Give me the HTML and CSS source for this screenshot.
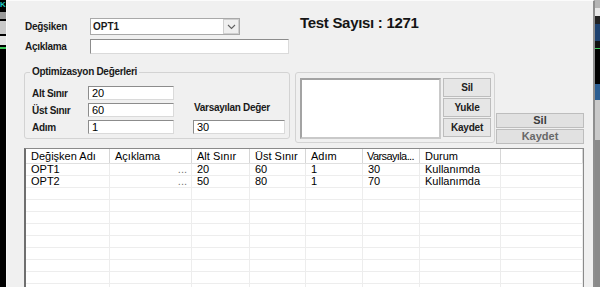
FILE: index.html
```html
<!DOCTYPE html>
<html lang="tr">
<head>
  <meta charset="UTF-8" />
  <meta name="viewport" content="width=device-width, initial-scale=1.0" />
  <title>Optimizasyon</title>
  <link rel="stylesheet" href="styles.css">
</head>
<body>
  <div class="screen">
    <div class="strip strip-left">
      <span class="sl-k">K</span>
      <span class="sl-gap"></span>
      <span class="sl-bar"></span>
      <span class="sl-gap"></span>
      <span class="sl-box"></span>
      <span class="sl-gap"></span>
      <span class="sl-box2"></span>
      <span class="sl-gap"></span>
      <span class="sl-green"></span>
    </div>

    <div class="dialog">
      <div class="top-row">
        <div class="fields">
          <div class="field-row">
            <label class="lbl">Değşiken</label>
            <div class="combo">
              <span class="combo-text">OPT1</span>
              <span class="combo-arrow">
                <svg width="9" height="6" viewBox="0 0 9 6"><polyline points="1,1 4.5,4.5 8,1" fill="none" stroke="#606060" stroke-width="1.1"/></svg>
              </span>
            </div>
          </div>
          <div class="field-row">
            <label class="lbl">Açıklama</label>
            <input class="txt txt-desc" type="text" value="">
          </div>
        </div>
        <div class="test-count">Test Sayısı : 1271</div>
      </div>

      <div class="mid-row">
        <fieldset class="opt-group">
          <legend>Optimizasyon Değerleri</legend>
          <div class="opt-cols">
            <div class="opt-left">
              <div class="opt-row">
                <label class="lbl opt-lbl">Alt Sınır</label>
                <input class="txt opt-txt" type="text" value="20">
              </div>
              <div class="opt-row">
                <label class="lbl opt-lbl">Üst Sınır</label>
                <input class="txt opt-txt" type="text" value="60">
              </div>
              <div class="opt-row">
                <label class="lbl opt-lbl">Adım</label>
                <input class="txt opt-txt" type="text" value="1">
              </div>
            </div>
            <div class="opt-right">
              <label class="lbl default-lbl">Varsayılan Değer</label>
              <input class="txt default-txt" type="text" value="30">
            </div>
          </div>
        </fieldset>

        <div class="preset-group">
          <div class="preset-list"></div>
          <div class="preset-btns">
            <button class="btn-small">Sil</button>
            <button class="btn-small">Yukle</button>
            <button class="btn-small">Kaydet</button>
          </div>
        </div>

        <div class="big-btns">
          <button class="btn-big">Sil</button>
          <button class="btn-big btn-dim">Kaydet</button>
        </div>
      </div>

      <div class="listview">
        <div class="lv-row lv-head">
          <span>Değişken Adı</span><span>Açıklama</span><span>Alt Sınır</span><span>Üst Sınır</span><span>Adım</span><span class="tight">Varsayıla...</span><span>Durum</span><span></span>
        </div>
        <div class="lv-row">
          <span>OPT1</span><span class="dots">...</span><span>20</span><span>60</span><span>1</span><span>30</span><span>Kullanımda</span><span></span>
        </div>
        <div class="lv-row">
          <span>OPT2</span><span class="dots">...</span><span>50</span><span>80</span><span>1</span><span>70</span><span>Kullanımda</span><span></span>
        </div>
        <div class="lv-row"><span></span><span></span><span></span><span></span><span></span><span></span><span></span><span></span></div>
        <div class="lv-row"><span></span><span></span><span></span><span></span><span></span><span></span><span></span><span></span></div>
        <div class="lv-row"><span></span><span></span><span></span><span></span><span></span><span></span><span></span><span></span></div>
        <div class="lv-row"><span></span><span></span><span></span><span></span><span></span><span></span><span></span><span></span></div>
        <div class="lv-row"><span></span><span></span><span></span><span></span><span></span><span></span><span></span><span></span></div>
        <div class="lv-row"><span></span><span></span><span></span><span></span><span></span><span></span><span></span><span></span></div>
        <div class="lv-row"><span></span><span></span><span></span><span></span><span></span><span></span><span></span><span></span></div>
        <div class="lv-row"><span></span><span></span><span></span><span></span><span></span><span></span><span></span><span></span></div>
        <div class="lv-row"><span></span><span></span><span></span><span></span><span></span><span></span><span></span><span></span></div>
      </div>
    </div>

    <div class="strip strip-right">
      <span class="sr-top"></span>
      <span class="sr-white"></span>
      <span class="sr-dark"></span>
      <span class="sr-navy"></span>
      <span class="sr-dark2"></span>
      <span class="sr-green"></span>
      <span class="sr-black"></span>
      <span class="sr-blue"></span>
      <span class="sr-light"></span>
      <span class="sr-gray"></span>
    </div>
  </div>
</body>
</html>
```

FILE: styles.css
```css
:root {
  --dlg-bg: #f0f0f0;
  --group-line: #d3d3d3;
  --text: #1a1a1a;
}

* {
  box-sizing: border-box;
}

body {
  margin: 0;
  font-family: 'Liberation Sans', Arial, sans-serif;
  color: var(--text);
  overflow: hidden;
}

.screen {
  display: flex;
  width: 600px;
  height: 287px;
  overflow: hidden;
  background: #000;
}

/* other windows peeking at the edges */
.strip {
  display: flex;
  flex-direction: column;
  overflow: hidden;
}

.strip-left {
  width: 6px;
  background: #000;
}

.sl-k {
  height: 10px;
  color: #1fc9c4;
  font: bold 8px/10px 'Liberation Sans', sans-serif;
}

.sl-gap { height: 2px; }
.sl-bar { height: 7px; background: #9a9a9a; }
.sl-box { height: 13px; background: #c8c8c8; }
.sl-box2 { height: 9px; background: #e4e4e4; }
.sl-green { height: 2px; background: #3cc85a; }

.strip-right {
  width: 5px;
  background: #7c7c7c;
}

.sr-top { height: 8px; background: #b5b5b5; }
.sr-white { height: 8px; background: #e8e8e8; }
.sr-dark { height: 8px; background: #222; }
.sr-navy { height: 17px; background: #1d416e; }
.sr-dark2 { height: 7px; background: #101010; }
.sr-green { height: 1px; background: #3cc85a; }
.sr-black { height: 35px; background: #000; }
.sr-blue { height: 16px; background: #2b5e92; }
.sr-light { height: 40px; background: #c9c9c9; }
.sr-gray { flex: 1; background: #8a8a8a; }

/* dialog */
.dialog {
  width: 589px;
  display: flex;
  flex-direction: column;
  background: var(--dlg-bg);
  border-top: 1px solid #fbfbfb;
  border-left: 1px solid #f8f8f8;
  border-right: 2px solid #8e8e8e;
  padding: 17px 0 0 17px;
  overflow: hidden;
}

.lbl {
  font-size: 10px;
  font-weight: bold;
  letter-spacing: -0.3px;
  color: var(--text);
}

.txt {
  margin: 0;
  height: 15px;
  padding: 0 3px;
  border: 1px solid;
  border-color: #8c8c8c #dadada #dadada #8c8c8c;
  background: #fff;
  font: 11px/13px 'Liberation Sans', sans-serif;
  color: #000;
  outline: none;
}

.top-row {
  display: flex;
}

.fields {
  width: 266px;
  display: flex;
  flex-direction: column;
  gap: 4px;
}

.field-row {
  display: flex;
  align-items: center;
}

.field-row .lbl {
  width: 66px;
  padding-left: 1px;
}

.combo {
  display: flex;
  width: 150px;
  height: 17px;
  border: 1px solid #a9a9a9;
  background: #fff;
}

.combo-text {
  flex: 1;
  padding-left: 2px;
  font-size: 10px;
  font-weight: bold;
  line-height: 15px;
}

.combo-arrow {
  width: 16px;
  display: flex;
  align-items: center;
  justify-content: center;
  border: 1px solid #cfcfcf;
  background: #efefef;
}

.txt-desc {
  width: 199px;
}

.test-count {
  margin: -3px 0 0 10px;
  font-size: 15px;
  font-weight: bold;
  line-height: 16px;
  letter-spacing: -0.3px;
  color: #151515;
}

/* middle band */
.mid-row {
  display: flex;
  align-items: flex-start;
  margin-top: 12px;
}

.opt-group {
  width: 266px;
  min-width: 0;
  margin: 0;
  padding: 8px 0 4px 7px;
  border: 1px solid var(--group-line);
  border-radius: 3px;
}

.opt-group legend {
  margin-left: -2px;
  padding: 0 2px;
  font-size: 10px;
  font-weight: bold;
  line-height: 12px;
  letter-spacing: -0.3px;
}

.opt-cols {
  display: flex;
}

.opt-left {
  display: flex;
  flex-direction: column;
  gap: 3px;
}

.opt-row {
  display: flex;
  align-items: center;
}

.opt-lbl {
  width: 56px;
}

.opt-txt {
  width: 86px;
  height: 14px;
}

.opt-right {
  display: flex;
  flex-direction: column;
  justify-content: flex-end;
  margin-left: 19px;
}

.default-lbl {
  line-height: 12px;
  margin: 0 0 6px 1px;
}

.default-txt {
  width: 92px;
  height: 14px;
}

.preset-group {
  display: flex;
  gap: 2px;
  width: 200px;
  height: 71px;
  margin: 6px 0 0 5px;
  padding: 5px 0 0 4px;
  border: 1px solid var(--group-line);
  border-radius: 3px;
}

.preset-list {
  width: 141px;
  height: 61px;
  background: #fff;
  border: 2px solid;
  border-color: #a3a3a3 #c9c9c9 #c9c9c9 #a3a3a3;
}

.preset-btns {
  display: flex;
  flex-direction: column;
  gap: 1px;
}

.btn-small,
.btn-big {
  margin: 0;
  padding: 0;
  font-family: 'Liberation Sans', sans-serif;
  font-weight: bold;
  border: 1px solid #bdbdbd;
  background: #e6e6e6;
}

.btn-small {
  width: 48px;
  height: 19px;
  font-size: 10px;
  letter-spacing: -0.2px;
  color: #202020;
}

.big-btns {
  display: flex;
  flex-direction: column;
  gap: 1px;
  margin: 47px 0 0 1px;
}

.btn-big {
  width: 88px;
  height: 15px;
  font-size: 11px;
  line-height: 13px;
  color: #3c3c3c;
  background: #e1e1e1;
}

.btn-dim {
  color: #686868;
}

/* list view */
.listview {
  flex: 1;
  min-height: 0;
  width: 560px;
  margin-top: 4px;
  background: #fff;
  border-top: 1px solid #8a8a8a;
  border-left: 2px solid #6f6f6f;
  border-right: 1px solid #8a8a8a;
  overflow: hidden;
}

.lv-row {
  display: grid;
  grid-template-columns: 84px 82px 58px 56px 57px 57px 81px 1fr;
  height: 12px;
  border-bottom: 1px solid #ededed;
  font-size: 11px;
  line-height: 11px;
  color: #000;
}

.lv-row span {
  padding-left: 5px;
  white-space: nowrap;
  overflow: hidden;
  border-right: 1px solid #ededed;
}

.lv-head {
  height: 15px;
  border-bottom-color: #e0e0e0;
  line-height: 14px;
}

.lv-head span {
  border-right-color: #d6d6d6;
}

.lv-head span.tight {
  padding-left: 4px;
  letter-spacing: -0.6px;
}

.lv-row span.dots {
  text-align: right;
  padding-right: 4px;
  color: #777;
}
```
